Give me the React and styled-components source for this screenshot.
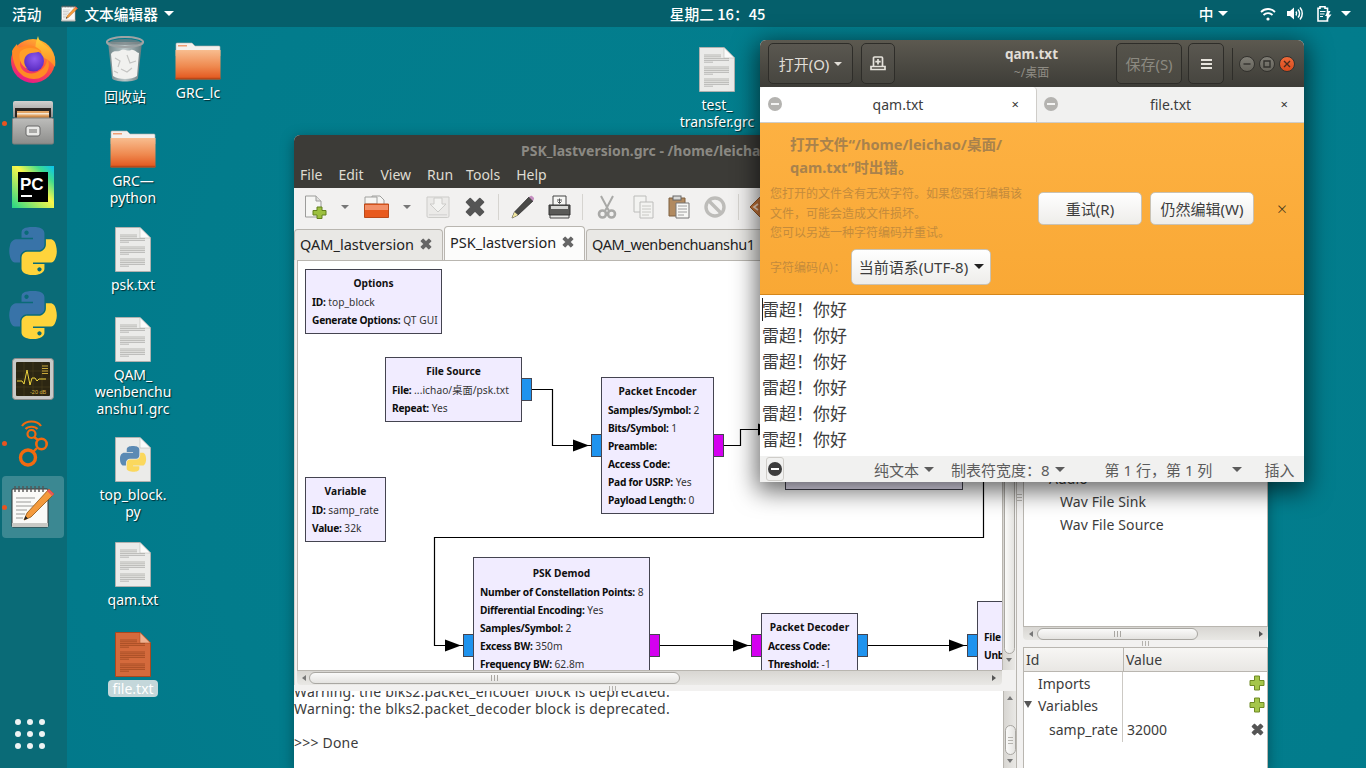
import React from "react";
import styled, { createGlobalStyle } from "styled-components";

const SANS = `"Noto Sans", "Noto Sans CJK SC", sans-serif`;
const CJK = `"Noto Sans CJK SC", sans-serif`;
const CANVAS_X = 298;
const CANVAS_Y = 261;

const GlobalStyle = createGlobalStyle`
    html, body {
        margin: 0;
        height: 100%;
        overflow: hidden;
        background: #027d8d;
    }
    * { box-sizing: border-box; }
`;

/* ---------- drawings ---------- */

const FirefoxIcon = () => (
    <svg width="46" height="47" viewBox="0 0 46 47">
        <defs>
            <linearGradient id="ffBody" x1="0.7" y1="0" x2="0.3" y2="1">
                <stop offset="0" stopColor="#ffb52e" />
                <stop offset="0.5" stopColor="#ff563b" />
                <stop offset="1" stopColor="#e5178c" />
            </linearGradient>
            <linearGradient id="ffFlame" x1="0.5" y1="0" x2="0.5" y2="1">
                <stop offset="0" stopColor="#ffd43b" />
                <stop offset="1" stopColor="#ff8a24" />
            </linearGradient>
            <radialGradient id="ffGlobe" cx="0.55" cy="0.4" r="0.7">
                <stop offset="0" stopColor="#8f5cf0" />
                <stop offset="1" stopColor="#4f22b8" />
            </radialGradient>
        </defs>
        <circle cx="23" cy="25" r="22" fill="url(#ffBody)" />
        <path d="M28 0C29 7 37 9 41 14C45 19 46 25 45 31C42 26 36 22 27 19C24 12 26 6 28 0Z" fill="url(#ffFlame)" />
        <path d="M2 15C4 11 6 9 7 8C7 11 9 12 12 11C18 8 27 10 31 15C33 20 25 20 21 19C15 18 10 22 10 27C10 34 17 39 25 37C32 35 37 29 37 23C42 30 37 43 24 43C11 43 3 32 2 15Z" fill="#ff8a25" />
        <circle cx="23.5" cy="25" r="10.5" fill="url(#ffGlobe)" />
        <path d="M10 16C14 11 25 11 30 15C27 18 20 15 16 20C13 24 14 30 18 33C11 31 8 22 10 16Z" fill="#ff9f2a" />
    </svg>
);

const CabinetIcon = () => (
    <svg width="44" height="46" viewBox="0 0 44 46">
        <defs>
            <linearGradient id="cabTop" x1="0" y1="0" x2="0" y2="1">
                <stop offset="0" stopColor="#d2d2d0" />
                <stop offset="1" stopColor="#8f8f8d" />
            </linearGradient>
            <linearGradient id="cabFront" x1="0" y1="0" x2="0" y2="1">
                <stop offset="0" stopColor="#bdbdbb" />
                <stop offset="1" stopColor="#8d8d8b" />
            </linearGradient>
        </defs>
        <path d="M2 3a2 2 0 0 1 2-2h36a2 2 0 0 1 2 2v14H2Z" fill="url(#cabTop)" />
        <rect x="4" y="8" width="36" height="14" fill="#2a2522" />
        <rect x="6" y="11" width="32" height="10" fill="#e3a566" />
        <rect x="6" y="13" width="32" height="1.5" fill="#f4e6d4" />
        <rect x="6" y="16" width="32" height="6" fill="#cf8b4a" />
        <rect x="1.5" y="18" width="41" height="26" rx="1.5" fill="url(#cabFront)" stroke="#7f7f7d" />
        <rect x="15" y="26" width="14" height="10" rx="2" fill="#e9e9e7" stroke="#666" />
        <rect x="18" y="29" width="8" height="4" fill="#a9a9a7" />
    </svg>
);

const PyCharmIcon = () => (
    <svg width="42" height="42" viewBox="0 0 42 42">
        <defs>
            <linearGradient id="pcEdge" x1="0" y1="1" x2="1" y2="0">
                <stop offset="0" stopColor="#21d789" />
                <stop offset="0.55" stopColor="#fcf84a" />
                <stop offset="0.8" stopColor="#3fdc8f" />
                <stop offset="1" stopColor="#07c3f2" />
            </linearGradient>
        </defs>
        <rect width="42" height="42" fill="url(#pcEdge)" />
        <rect x="6" y="6" width="30" height="30" fill="#000" />
        <text x="8" y="24" fontFamily="Liberation Sans, sans-serif" fontWeight="700" fontSize="17" fill="#fff">PC</text>
        <rect x="9" y="29" width="11" height="2" fill="#fff" />
    </svg>
);

const PythonIcon = ({ size = 48 }) => (
    <svg width={size} height={size} viewBox="0 0 111 112">
        <path fill="#3873a8" d="M54.9 0C50.3 0 45.9.4 42.1 1.1 30.8 3.1 28.7 7.3 28.7 15V25.3H55.5V28.7H18.6C10.8 28.7 4 33.4 1.9 42.3-.6 52.5-.7 58.8 1.9 69.5 3.8 77.4 8.3 83.1 16.1 83.1H25.3V70.9C25.3 62 33 54.2 42.1 54.2H68.8C76.3 54.2 82.2 48 82.2 40.6V15C82.2 7.8 76.1 2.3 68.8 1.1 64.2.3 59.5 0 54.9 0ZM40.4 8.2C43.2 8.2 45.4 10.5 45.4 13.3 45.4 16.1 43.2 18.4 40.4 18.4 37.6 18.4 35.4 16.1 35.4 13.3 35.4 10.5 37.6 8.2 40.4 8.2Z" />
        <path fill="#ffd43b" d="M85.6 28.7V40.6C85.6 49.8 77.8 57.6 68.8 57.6H42.1C34.8 57.6 28.7 63.9 28.7 71.2V96.8C28.7 104 35 108.3 42.1 110.4 50.6 112.9 58.7 113.3 68.8 110.4 75.5 108.4 82.2 104.6 82.2 96.8V86.6H55.5V83.1H95.6C103.4 83.1 106.3 77.7 109 69.5 111.8 61.1 111.7 53 109 42.3 107.1 34.6 103.4 28.7 95.6 28.7ZM70.6 93.7C73.4 93.7 75.6 96 75.6 98.8 75.6 101.6 73.4 103.9 70.6 103.9 67.8 103.9 65.6 101.6 65.6 98.8 65.6 96 67.8 93.7 70.6 93.7Z" />
    </svg>
);

const MonitorIcon = () => (
    <svg width="42" height="42" viewBox="0 0 42 42">
        <rect x="0.5" y="0.5" width="41" height="41" rx="3" fill="#c9c9c7" stroke="#8a8a88" />
        <rect x="4" y="4" width="34" height="34" rx="1" fill="#2c2612" />
        <path d="M4 13H38M4 21H38M4 29H38M12 4V38M21 4V38M30 4V38" stroke="#4a4220" strokeWidth="0.6" />
        <path d="M5 23H10L12 26L15 12L18 27L20 20H23L25 23L27 21H34" fill="none" stroke="#eed43f" strokeWidth="1" />
        <path d="M30 8H36M30 10.5H36M30 13H36M30 15.5H36" stroke="#c9a93a" strokeWidth="1" />
        <text x="18" y="35.5" fontFamily="Liberation Sans, sans-serif" fontSize="5.5" fill="#d8b440">-20 dB</text>
    </svg>
);

const GnuRadioIcon = () => (
    <svg width="30" height="48" viewBox="0 0 30 48" fill="none" stroke="#f26a0f">
        <path d="M4 7C8 1 19 1 23 7" strokeWidth="2.2" />
        <path d="M7.5 10C10 7 17 7 19.5 10" strokeWidth="2" />
        <circle cx="13.5" cy="15" r="4" strokeWidth="2.2" />
        <circle cx="23.5" cy="25" r="5.2" strokeWidth="2.6" />
        <circle cx="10" cy="38.5" r="7.5" strokeWidth="3.4" />
        <path d="M16 18L20 21M19 29L15 33" strokeWidth="2.4" />
    </svg>
);

const NotepadIcon = ({ size = 44 }) => (
    <svg width={size} height={size} viewBox="0 0 44 44">
        <rect x="1" y="4" width="36" height="38" rx="1" fill="#fafaf8" stroke="#333" />
        <rect x="1" y="38" width="36" height="4" fill="#c9c9c5" />
        <path d="M4 1V7M8 1V7M12 1V7M16 1V7M20 1V7M24 1V7M28 1V7M32 1V7" stroke="#555" strokeWidth="1.4" />
        <path d="M5 13H24M5 17H20M5 21H24M5 25H16M5 29H14M5 33H12" stroke="#9a9a98" strokeWidth="1.2" />
        <path d="M38 4L43 9L20 32L13 35L16 28Z" fill="#f49a3c" stroke="#8f5513" strokeWidth="0.8" />
        <path d="M38 4L43 9L41 11L36 6Z" fill="#e8585c" />
        <path d="M13 35L14.5 31L17 33.5Z" fill="#222" />
    </svg>
);

const TrashIcon = () => (
    <svg width="38" height="46" viewBox="0 0 38 46">
        <defs>
            <linearGradient id="binBody" x1="0" y1="0" x2="1" y2="0">
                <stop offset="0" stopColor="#6f8588" />
                <stop offset="0.5" stopColor="#bcc7c8" />
                <stop offset="1" stopColor="#667a7d" />
            </linearGradient>
        </defs>
        <path d="M2 6L6 42C6 44 12 45.5 19 45.5C26 45.5 32 44 32 42L36 6Z" fill="url(#binBody)" />
        <path d="M5 18C8 13 12 17 15 14C18 12 21 16 25 14C28 13 31 17 33 17L31 40C26 44 12 44 7 40Z" fill="#f1f1ef" />
        <path d="M9 22L14 25L12 31M21 19L24 27L30 25M15 33L21 36L26 32M8 35L12 37" fill="none" stroke="#c4c4c2" strokeWidth="1.2" />
        <ellipse cx="19" cy="6" rx="18" ry="5" fill="none" stroke="#9da3a4" strokeWidth="2.2" />
        <ellipse cx="19" cy="6" rx="15" ry="3" fill="#7a8385" fillOpacity="0.75" />
    </svg>
);

const FolderIcon = ({ id }) => (
    <svg width="46" height="38" viewBox="0 0 46 38">
        <defs>
            <linearGradient id={id} x1="0" y1="0" x2="0" y2="1">
                <stop offset="0" stopColor="#f8bd8f" />
                <stop offset="0.55" stopColor="#ef8a50" />
                <stop offset="1" stopColor="#e2541b" />
            </linearGradient>
        </defs>
        <path d="M1 2a1 1 0 0 1 1-1h15l3 3h24a1 1 0 0 1 1 1v9H1Z" fill="#f3f1ee" stroke="#b9b4ae" strokeWidth="0.6" />
        <rect x="3" y="3" width="9" height="1.5" fill="#ee9d72" />
        <path d="M0.5 8h45v28.5a1 1 0 0 1-1 1h-43a1 1 0 0 1-1-1Z" fill={`url(#${id})`} />
        <path d="M0.5 36.5h45" stroke="#b8481a" strokeWidth="1.4" />
    </svg>
);

const DocIcon = ({ orange, python }) => {
    const page = orange ? "#d46a3c" : "#ebebe9";
    const edge = orange ? "#a8481f" : "#b1b1af";
    const line = orange ? "#96431c" : "#a3a3a1";
    const rows = [8, 9.8, 11.6, 13.4, 15.2, 20, 21.8, 23.6, 25.4, 27.2, 32, 33.8, 35.6, 37.4, 39.2];
    return (
        <svg width="36" height="45" viewBox="0 0 36 45">
            <path d="M0.5 0.5H25L35.5 11V44.5H0.5Z" fill={page} stroke={edge} />
            <path d="M25 0.5V11H35.5Z" fill={orange ? "#eeb08f" : "#fbfbfa"} stroke={edge} strokeWidth="0.5" />
            {!python && rows.map((y, i) => (
                <path key={y} d={`M5 ${y}H${i % 5 === 4 ? 14 : i < 2 ? 22 : 30}`} stroke={line} strokeWidth="0.7" />
            ))}
            {python && (
                <g transform="translate(5 9) scale(0.235)" opacity="0.8">
                    <path fill="#3873a8" d="M54.9 0C42 0 28.7 3 28.7 15V25.3H55.5V28.7H18.6C8 28.7 0 38 0 55C0 72 6 83.1 16.1 83.1H25.3V70.9C25.3 62 33 54.2 42.1 54.2H68.8C76.3 54.2 82.2 48 82.2 40.6V15C82.2 3 68 0 54.9 0Z" />
                    <path fill="#ffd43b" d="M85.6 28.7V40.6C85.6 49.8 77.8 57.6 68.8 57.6H42.1C34.8 57.6 28.7 63.9 28.7 71.2V96.8C28.7 112 82.2 116 82.2 96.8V86.6H55.5V83.1H95.6C105 83.1 111 72 111 55C111 40 105 28.7 95.6 28.7Z" />
                </g>
            )}
        </svg>
    );
};

const WifiIcon = () => (
    <svg width="16" height="14" viewBox="0 0 16 14" fill="none" stroke="#fff" strokeWidth="1.8">
        <path d="M1 5C5 1 11 1 15 5" />
        <path d="M3.5 8C6 5.5 10 5.5 12.5 8" />
        <circle cx="8" cy="12" r="1.6" fill="#fff" stroke="none" />
    </svg>
);

const SoundIcon = () => (
    <svg width="16" height="15" viewBox="0 0 16 15" fill="none" stroke="#fff" strokeWidth="1.5">
        <path d="M0 5H3L7 1.5V13.5L3 10H0Z" fill="#fff" stroke="none" />
        <path d="M9 5.5C10 7 10 8 9 9.5" />
        <path d="M11 3.5C13 6 13 9 11 11.5" />
        <path d="M13 1.5C16 5 16 10 13 13.5" />
    </svg>
);

const BatteryIcon = () => (
    <svg width="15" height="16" viewBox="0 0 15 16">
        <path d="M3 0.8H8V2.2H10.5V15H1V2.2H3Z" fill="none" stroke="#fff" strokeWidth="1.6" />
        <path d="M3 5.5H8.5M3 8H7.5M3 10.5H6" stroke="#fff" strokeWidth="1.2" />
        <path d="M11 5L8 10H10.5L9.5 15L14.5 8.5H11.8L13.5 5Z" fill="#fff" />
    </svg>
);

const NewFileTool = () => (
    <svg width="23" height="24" viewBox="0 0 23 24">
        <path d="M1.5 1H12L17 6V22H1.5Z" fill="#f6f6f4" stroke="#9c9c9a" />
        <path d="M12 1V6H17" fill="#e0e0de" stroke="#9c9c9a" />
        <path d="M13 12H18V15.5H22V20H18V23.5H13V20H9V15.5H13Z" fill="#9cc03f" stroke="#62801e" />
    </svg>
);

const OpenTool = () => (
    <svg width="25" height="24" viewBox="0 0 25 24">
        <path d="M8 1H16L20 5V14H8Z" fill="#f6f6f4" stroke="#a0a09e" />
        <path d="M1 2H13V9H1Z" fill="#f6f6f4" stroke="#a0a09e" />
        <path d="M0.5 9H24.5V22.5H0.5Z" fill="#e85a1e" stroke="#bb4a1a" />
        <path d="M1 10H24V15H1Z" fill="#f29068" />
    </svg>
);

const SaveTool = () => (
    <svg width="24" height="24" viewBox="0 0 24 24" opacity="0.45">
        <path d="M1 2H23V21a1.5 1.5 0 0 1-1.5 1.5H2.5A1.5 1.5 0 0 1 1 21Z" fill="#e4e3e0" stroke="#a0a09c" />
        <path d="M8 3H16V9H20L12 17L4 9H8Z" fill="#f6f6f4" stroke="#a0a09c" />
        <rect x="3" y="19" width="18" height="1.5" fill="#bbb" />
    </svg>
);

const CloseCross = ({ size = 20, color = "#555" }) => (
    <svg width={size} height={size} viewBox="0 0 20 20">
        <path d="M3 6L6 3L10 7L14 3L17 6L13 10L17 14L14 17L10 13L6 17L3 14L7 10Z" fill={color} stroke={color} strokeWidth="1.5" strokeLinejoin="round" />
    </svg>
);

const PencilTool = () => (
    <svg width="24" height="24" viewBox="0 0 24 24">
        <path d="M18 2L22 6L7 20L1 23L3.5 17Z" fill="#4a4a48" stroke="#222" strokeWidth="0.7" />
        <path d="M18 2L20 0.8C21 0.4 23.5 3 23 4L22 6Z" fill="#c58fc0" />
        <path d="M1 23L3.5 17L7 20Z" fill="#f0e6a0" />
    </svg>
);

const PrinterTool = () => (
    <svg width="23" height="24" viewBox="0 0 23 24">
        <path d="M5 1H18V11H5Z" fill="#f7f7f5" stroke="#444" />
        <path d="M9 5H14M11.5 3.5V8M9.5 6.5L11.5 8.5L13.5 6.5" stroke="#555" fill="none" />
        <path d="M1 10H22V20H1Z" fill="#5a5a58" stroke="#333" />
        <path d="M3 11H20V14H3Z" fill="#d8d8d6" />
        <path d="M2 20H21V23H2Z" fill="#e8e8e6" stroke="#444" />
    </svg>
);

const ScissorsTool = () => (
    <svg width="20" height="24" viewBox="0 0 20 24" fill="none" stroke="#a9a9a7" strokeWidth="2">
        <path d="M4 1L12 16M16 1L8 16" />
        <circle cx="5.5" cy="19" r="3.5" strokeWidth="2.6" />
        <circle cx="14.5" cy="19" r="3.5" strokeWidth="2.6" />
    </svg>
);

const CopyTool = () => (
    <svg width="21" height="24" viewBox="0 0 21 24" fill="#f3f3f1" stroke="#bcbcba">
        <path d="M1 1H13V17H1Z" />
        <path d="M7 7H20V23H7Z" />
        <path d="M9 11H18M9 14H18M9 17H18M9 20H16" strokeWidth="0.8" />
    </svg>
);

const PasteTool = () => (
    <svg width="22" height="24" viewBox="0 0 22 24">
        <path d="M1 3H17V21H1Z" fill="#b18a60" stroke="#7f6041" />
        <rect x="5" y="1" width="8" height="4" fill="#d8d8d6" stroke="#666" />
        <path d="M8 8H21V23H8Z" fill="#f7f7f5" stroke="#777" />
        <path d="M10 11H19M10 14H19M10 17H19M10 20H16" stroke="#888" strokeWidth="0.8" />
    </svg>
);

const StopTool = () => (
    <svg width="22" height="22" viewBox="0 0 22 22" fill="none" stroke="#bdbcb9" strokeWidth="3.4">
        <circle cx="11" cy="11" r="9" />
        <path d="M5 5L17 17" />
    </svg>
);

const DiamondTool = () => (
    <svg width="24" height="24" viewBox="0 0 24 24">
        <path d="M12 1L23 12L12 23L1 12Z" fill="#c8773a" stroke="#8f5425" />
        <path d="M9 9L5 12L9 15" fill="none" stroke="#f5dcc6" strokeWidth="1.6" />
    </svg>
);

const NewTabIcon = () => (
    <svg width="16" height="15" viewBox="0 0 16 15" fill="none" stroke="#e6e3dc" strokeWidth="1.7">
        <path d="M3.5 10V2a1 1 0 0 1 1-1h7a1 1 0 0 1 1 1v8" />
        <path d="M1 13.5H15V10.5H1Z" />
        <path d="M8 3V8.5M5.3 5.7H10.7" />
    </svg>
);

const PlusIcon = () => (
    <svg width="16" height="16" viewBox="0 0 16 16">
        <path d="M5.5 1H10.5V5.5H15V10.5H10.5V15H5.5V10.5H1V5.5H5.5Z" fill="#a5c64a" stroke="#6f8a24" />
    </svg>
);

const ControlGlyph = ({ d, filled }) => (
    <svg width="10" height="10" viewBox="0 0 10 10" fill="none" stroke={filled ? "#4a2a1c" : "#33322e"} strokeWidth="1.4">
        <path d={d} />
    </svg>
);

/* ---------- desktop shell ---------- */

const Desktop = styled.div`
    position: relative;
    width: 1366px;
    height: 768px;
    overflow: hidden;
    font-family: ${SANS};
    background: radial-gradient(circle at 60% 50%, #03808f 0%, #027c8c 70%, #02788a 100%);
`;
const TopBar = styled.div`
    display: flex;
    align-items: center;
    height: 27px;
    padding-left: 12px;
    background: #055f6b;
    color: #fff;
    font-family: ${CJK};
    font-size: 14.7px;
    font-weight: 500;
`;
const AppMenu = styled.div`
    display: flex;
    align-items: center;
    margin-left: 20px;
    gap: 6px;
`;
const Clock = styled.div`
    margin-left: 496px;
    width: 110px;
    white-space: pre;
`;
const TrayGroup = styled.div`
    display: flex;
    align-items: center;
    margin-left: 419px;
`;
const TrayItem = styled.span`
    display: flex;
    margin-left: ${(p) => p.$ml || 0}px;
`;
const Caret = styled.span`
    display: inline-block;
    width: 0;
    height: 0;
    flex: none;
    margin-left: ${(p) => p.$ml || 0}px;
    border-left: ${(p) => p.$size || 5}px solid transparent;
    border-right: ${(p) => p.$size || 5}px solid transparent;
    border-top: ${(p) => p.$size || 5}px solid ${(p) => p.$color || "#fff"};
`;
const Dock = styled.div`
    position: absolute;
    left: 0;
    top: 27px;
    bottom: 0;
    width: 67px;
    display: flex;
    flex-direction: column;
    align-items: flex-start;
    padding: 0 0 19px 2px;
    background: #0a6b77;
`;
const DockItem = styled.div`
    position: relative;
    width: 62px;
    height: 62px;
    margin: 1px 0;
    border-radius: 4px;
    display: flex;
    align-items: center;
    justify-content: center;
    background: ${(p) => (p.$active ? "rgba(255, 255, 255, 0.2)" : "transparent")};
    &::before {
        content: "";
        display: ${(p) => (p.$running ? "block" : "none")};
        position: absolute;
        left: 0;
        top: 29px;
        width: 5px;
        height: 5px;
        border-radius: 50%;
        background: #e95420;
    }
`;
const AppGrid = styled.div`
    margin: auto 0 0 13px;
    display: grid;
    grid-template-columns: repeat(3, 6px);
    gap: 6px;
`;
const AppDot = styled.span`
    width: 6px;
    height: 6px;
    border-radius: 50%;
    background: #eef3f3;
`;
const DesktopIcon = styled.div`
    position: absolute;
    left: ${(p) => p.$cx - 45}px;
    top: ${(p) => p.$top}px;
    width: 90px;
    display: flex;
    flex-direction: column;
    align-items: center;
    color: #fff;
`;
const IconLabel = styled.div`
    margin-top: ${(p) => p.$gap ?? 4}px;
    padding: 0 ${(p) => (p.$selected ? 4 : 0)}px;
    border-radius: 4px;
    background: ${(p) => (p.$selected ? "#c4d7da" : "transparent")};
    font-size: 14px;
    line-height: 17px;
    text-align: center;
    white-space: pre-line;
    text-shadow: ${(p) => (p.$selected ? "none" : "1px 1px 1px rgba(0, 0, 0, 0.65)")};
`;

/* ---------- GNU Radio Companion window ---------- */

const GrcWindow = styled.div`
    position: absolute;
    left: 294px;
    top: 135px;
    width: 974px;
    height: 633px;
    display: flex;
    flex-direction: column;
    background: #f2f1f0;
    border-radius: 6px 6px 0 0;
    box-shadow: 0 3px 14px rgba(0, 0, 0, 0.35);
    color: #3c3c3c;
`;
const GrcTitle = styled.div`
    height: 25px;
    flex: none;
    background: #3c3b37;
    border-radius: 6px 6px 0 0;
    color: #8b8983;
    font-size: 14px;
    font-weight: 700;
    line-height: 31px;
    padding-left: 227px;
    white-space: nowrap;
`;
const GrcMenu = styled.div`
    height: 28px;
    flex: none;
    display: flex;
    align-items: center;
    padding-left: 6px;
    background: #3c3b37;
    color: #dfdbd2;
    font-size: 14px;
`;
const MenuEntry = styled.span`
    margin-right: ${(p) => p.$mr}px;
`;
const GrcToolbar = styled.div`
    height: 38px;
    flex: none;
    display: flex;
    align-items: center;
    padding-left: 3px;
`;
const ToolSlot = styled.div`
    width: ${(p) => p.$w}px;
    flex: none;
    display: flex;
    justify-content: center;
`;
const ToolSep = styled.div`
    width: 1px;
    height: 26px;
    background: #d6d4d0;
`;
const GrcBody = styled.div`
    flex: 1;
    display: flex;
    min-height: 0;
`;
const GrcLeft = styled.div`
    width: 722px;
    flex: none;
    display: flex;
    flex-direction: column;
    min-height: 0;
`;
const GrcTabs = styled.div`
    height: 34px;
    flex: none;
    display: flex;
    align-items: flex-end;
    overflow: hidden;
`;
const GrcTab = styled.div`
    flex: none;
    height: ${(p) => (p.$active ? 34 : 31)}px;
    width: ${(p) => p.$w}px;
    margin-right: ${(p) => p.$mr || 0}px;
    padding: 0 0 ${(p) => (p.$active ? 4 : 2)}px ${(p) => p.$pl}px;
    display: flex;
    align-items: center;
    gap: 5px;
    border: 1px solid #b9b6b0;
    border-bottom: none;
    border-radius: 4px 4px 0 0;
    background: ${(p) => (p.$active ? "#fcfcfb" : "#e9e8e5")};
    color: #222;
    font-size: 14.5px;
    letter-spacing: ${(p) => p.$ls || 0}px;
    white-space: nowrap;
`;
const ScrollFrame = styled.div`
    flex: none;
    height: 425px;
    margin-right: 1px;
    display: grid;
    grid-template-columns: 1fr 13px;
    grid-template-rows: 410px 15px;
    padding-left: 2px;
    border-left: 1px solid #d6d4d0;
`;
const Canvas = styled.div`
    position: relative;
    overflow: hidden;
    background: #fff;
    border-left: 1px solid #b9b6b0;
    border-top: 1px solid #b9b6b0;
`;
const WireLayer = styled.svg`
    position: absolute;
    left: 0;
    top: 0;
`;
const Block = styled.div`
    position: absolute;
    left: ${(p) => p.$x - CANVAS_X}px;
    top: ${(p) => p.$y - CANVAS_Y}px;
    width: ${(p) => p.$w}px;
    height: ${(p) => p.$h}px;
    padding: ${(p) => p.$pt ?? 4}px 6px 0;
    background: #f1ecff;
    border: 1px solid #444450;
    font-size: 10.2px;
    line-height: 18px;
    color: #111;
    white-space: nowrap;
    overflow: hidden;
`;
const BlockTitle = styled.div`
    font-weight: 700;
    text-align: center;
    margin-bottom: 1px;
`;
const BlockRow = styled.div`
    color: #333;
    letter-spacing: 0.05px;
    b {
        color: #0c0c0c;
        font-weight: 700;
        letter-spacing: -0.25px;
    }
`;
const Port = styled.div`
    position: absolute;
    left: ${(p) => p.$x - CANVAS_X}px;
    top: ${(p) => p.$y - CANVAS_Y}px;
    width: 11px;
    height: 23px;
    background: ${(p) => (p.$kind === "out" ? "#d400f0" : "#1f93ee")};
    border: 1px solid #444450;
`;
const HScroll = styled.div`
    display: flex;
    align-items: center;
    height: ${(p) => p.$h || 15}px;
    padding: 0 1px;
    background: linear-gradient(#d8d6d2, #e9e8e5);
    border-top: 1px solid #b9b6b0;
    border-radius: 0 0 4px 4px;
`;
const ScrollArrow = styled.span`
    flex: none;
    width: 0;
    height: 0;
    margin: ${(p) => p.$m};
    border-top: 3px solid transparent;
    border-bottom: 3px solid transparent;
    border-right: ${(p) => (p.$dir === "left" ? "4px solid #777" : "none")};
    border-left: ${(p) => (p.$dir === "right" ? "4px solid #555" : "none")};
`;
const HThumb = styled.div`
    width: ${(p) => p.$w}px;
    height: 12px;
    flex: none;
    border: 1px solid #a9a7a2;
    border-radius: 6px;
    background: linear-gradient(#fafaf9, #e4e3e0);
    display: flex;
    align-items: center;
    justify-content: center;
`;
const Grip = styled.span`
    width: 7px;
    height: 6px;
    background: repeating-linear-gradient(90deg, #a9a7a2 0 1px, transparent 1px 3px);
`;
const Spacer = styled.div`
    flex: 1;
`;
const VScroll = styled.div`
    display: flex;
    flex-direction: column;
    align-items: center;
    background: linear-gradient(90deg, #d8d6d2, #e9e8e5);
    border-left: 1px solid #b9b6b0;
`;
const VThumb = styled.div`
    width: 11px;
    flex: none;
    height: ${(p) => p.$h}px;
    margin-top: ${(p) => p.$mt || 0}px;
    border: 1px solid #a9a7a2;
    border-radius: 6px;
    background: linear-gradient(90deg, #fafaf9, #e4e3e0);
    display: flex;
    align-items: center;
    justify-content: center;
`;
const VArrow = styled.span`
    flex: none;
    width: 0;
    height: 0;
    margin: ${(p) => p.$m};
    border-left: 3px solid transparent;
    border-right: 3px solid transparent;
    border-bottom: ${(p) => (p.$dir === "up" ? "4px solid #777" : "none")};
    border-top: ${(p) => (p.$dir === "down" ? "4px solid #777" : "none")};
`;
const ScrollCorner = styled.div`
    background: #f2f1f0;
`;
const HSash = styled.div`
    height: ${(p) => p.$h || 6}px;
    flex: none;
    display: flex;
    align-items: center;
    justify-content: center;
    padding-right: ${(p) => p.$pr || 0}px;
    background: #f2f1f0;
`;
const SashGrip = styled.span`
    width: 7px;
    height: 5px;
    background: repeating-linear-gradient(90deg, #b5b3ae 0 1px, transparent 1px 3px);
`;
const ConsoleRow = styled.div`
    flex: 1;
    min-height: 0;
    display: grid;
    grid-template-columns: 709px 13px;
`;
const Console = styled.div`
    background: #fff;
    overflow: hidden;
    font-size: 14px;
    line-height: 17px;
    white-space: pre;
    letter-spacing: 0.2px;
    color: #3c3c3c;
`;
const ConsoleText = styled.div`
    margin-top: -8px;
`;
const VSash = styled.div`
    width: 6px;
    flex: none;
    display: flex;
    align-items: center;
    justify-content: center;
    border-left: 1px solid #b9b6b0;
`;
const VSashGrip = styled.span`
    width: 5px;
    height: 7px;
    background: repeating-linear-gradient(#b5b3ae 0 1px, transparent 1px 3px);
`;
const GrcRight = styled.div`
    flex: 1;
    display: flex;
    flex-direction: column;
    min-height: 0;
    margin-left: 1px;
`;
const BlockTree = styled.div`
    flex: 1;
    min-height: 0;
    padding-top: 240px;
    background: #fff;
    border: 1px solid #b9b6b0;
    border-bottom: none;
    font-size: 14px;
    line-height: 23px;
    letter-spacing: 0.1px;
`;
const TreeRow = styled.div`
    padding-left: ${(p) => p.$indent}px;
`;
const VarTable = styled.div`
    height: 121px;
    flex: none;
    background: #fff;
    border: 1px solid #b9b6b0;
    border-bottom: none;
    font-size: 14px;
`;
const VarHeader = styled.div`
    height: 24px;
    display: grid;
    grid-template-columns: 99px 1fr;
    align-items: center;
    background: linear-gradient(#f7f6f4, #e9e7e4);
    border-bottom: 1px solid #b9b6b0;
`;
const VarHeadCell = styled.div`
    height: 100%;
    display: flex;
    align-items: center;
    padding-left: 2px;
    & + & {
        border-left: 1px solid #b9b6b0;
    }
`;
const VarRow = styled.div`
    position: relative;
    display: grid;
    grid-template-columns: 99px 1fr 20px;
    align-items: center;
    height: ${(p) => p.$h}px;
`;
const VarName = styled.div`
    height: 100%;
    display: flex;
    align-items: center;
    padding-left: ${(p) => p.$indent}px;
    border-right: 1px solid #ccc9c4;
    white-space: nowrap;
`;
const VarValue = styled.div`
    padding-left: 4px;
`;
const VarAction = styled.div`
    display: flex;
    justify-content: center;
`;
const Expander = styled.span`
    position: absolute;
    left: 0;
    top: 7px;
    width: 0;
    height: 0;
    border-left: 4px solid transparent;
    border-right: 4px solid transparent;
    border-top: 7px solid #555;
`;

/* ---------- gedit window ---------- */

const GeditWindow = styled.div`
    position: absolute;
    left: 760px;
    top: 40px;
    width: 544px;
    height: 442px;
    display: flex;
    flex-direction: column;
    border-radius: 6px 6px 0 0;
    background: #fff;
    box-shadow: 0 6px 24px 3px rgba(0, 0, 0, 0.6);
    font-family: ${SANS};
    color: #3d3d3d;
`;
const HeaderBar = styled.div`
    height: 47px;
    flex: none;
    display: grid;
    grid-template-columns: 1fr auto 1fr;
    align-items: center;
    padding: 0 9px 0 8px;
    border-radius: 6px 6px 0 0;
    background: linear-gradient(#5c5950, #3d3c37);
`;
const HeaderSide = styled.div`
    display: flex;
    align-items: center;
    justify-content: ${(p) => (p.$end ? "flex-end" : "flex-start")};
    gap: ${(p) => p.$gap}px;
`;
const HeaderButton = styled.div`
    width: ${(p) => p.$w}px;
    height: 41px;
    flex: none;
    display: flex;
    align-items: center;
    justify-content: center;
    gap: 5px;
    border: 1px solid #2e2d29;
    border-radius: 5px;
    background: ${(p) => (p.$disabled ? "linear-gradient(#55534b, #4a4841)" : "linear-gradient(#5a5750, #474640)")};
    color: ${(p) => (p.$disabled ? "#8c8a81" : "#e1ded7")};
    font-size: 15px;
`;
const Hamburger = styled.span`
    width: 11px;
    height: 10px;
    border-top: 2px solid #e6e3dc;
    border-bottom: 2px solid #e6e3dc;
    position: relative;
    &::after {
        content: "";
        position: absolute;
        left: 0;
        right: 0;
        top: 2px;
        height: 2px;
        background: #e6e3dc;
    }
`;
const HeaderTitle = styled.div`
    text-align: center;
    line-height: 17px;
`;
const TitleMain = styled.div`
    margin-top: -1px;
    color: #e1ded7;
    font-weight: 700;
    font-size: 13.5px;
`;
const TitleSub = styled.div`
    margin-top: 1px;
    color: #8f8c84;
    font-size: 12px;
`;
const HeaderSep = styled.span`
    width: 1px;
    height: 32px;
    margin-left: 2px;
    background: #2e2d29;
`;
const WindowControls = styled.div`
    display: flex;
    gap: 4px;
`;
const WindowControl = styled.span`
    width: 16px;
    height: 16px;
    border-radius: 50%;
    display: flex;
    align-items: center;
    justify-content: center;
    background: ${(p) => (p.$close ? "linear-gradient(#ef6a3a, #d94a1c)" : "linear-gradient(#7f7d75, #66645c)")};
    border: 1px solid #33322e;
`;
const GeditTabs = styled.div`
    height: 36px;
    flex: none;
    display: grid;
    grid-template-columns: 277px 1fr;
    background: #f1f1f0;
`;
const GeditTab = styled.div`
    position: relative;
    display: flex;
    align-items: center;
    justify-content: center;
    background: ${(p) => (p.$active ? "#fff" : "#f1f1f0")};
    border-right: ${(p) => (p.$active ? "1px solid #cfcdc9" : "none")};
    border-radius: 4px 4px 0 0;
    border-bottom: 1px solid #cfcdc9;
    font-size: 14px;
`;
const TabMinus = styled.span`
    position: absolute;
    left: ${(p) => p.$x}px;
    top: 10px;
    width: 14px;
    height: 14px;
    border-radius: 50%;
    background: #b4b3b0;
    &::after {
        content: "";
        position: absolute;
        left: 3px;
        right: 3px;
        top: 6px;
        height: 2px;
        background: #f4f4f3;
    }
`;
const TabClose = styled.span`
    position: absolute;
    right: ${(p) => p.$right}px;
    top: 7px;
    font-size: 13px;
    line-height: 20px;
    color: #333;
`;
const InfoBar = styled.div`
    height: 172px;
    flex: none;
    display: flex;
    flex-direction: column;
    padding: 10px 0 0 10px;
    background: linear-gradient(#fdb142, #f9a835);
    border-bottom: 1px solid #d5861a;
    font-family: ${CJK};
`;
const InfoTop = styled.div`
    display: flex;
    align-items: flex-end;
`;
const InfoMessage = styled.div`
    width: 268px;
    flex: none;
`;
const InfoHeading = styled.div`
    padding-left: 20px;
    font-family: ${SANS};
    font-size: 14.6px;
    font-weight: 700;
    line-height: 23px;
    color: #a9824c;
`;
const InfoText = styled.div`
    margin-top: 4px;
    font-size: 12px;
    line-height: 19.5px;
    color: #c48b3c;
`;
const InfoButton = styled.div`
    width: ${(p) => p.$w}px;
    height: ${(p) => p.$h}px;
    margin-right: ${(p) => p.$mr || 0}px;
    flex: none;
    display: flex;
    align-items: center;
    justify-content: center;
    gap: 6px;
    border: 1px solid #c9c2b4;
    border-radius: 5px;
    background: linear-gradient(#fff, #eeedea);
    color: #3d3d3d;
    font-family: ${SANS};
    font-size: 15px;
`;
const InfoActions = styled.div`
    display: flex;
    align-items: center;
    margin-bottom: 17px;
`;
const InfoClose = styled.span`
    margin-left: 22px;
    font-size: 12px;
    color: #4b3a1e;
`;
const InfoEncoding = styled.div`
    display: flex;
    align-items: center;
    gap: 6px;
    margin-top: 7px;
    font-size: 12px;
    color: #c48b3c;
`;
const EditorArea = styled.div`
    flex: 1;
    position: relative;
    padding: 1px 0 0 2px;
    font-family: ${CJK};
    font-size: 17px;
    line-height: 26px;
    color: #3d3d3d;
    background: #fff;
    &::before {
        content: "";
        position: absolute;
        left: 2px;
        top: 3px;
        width: 1px;
        height: 23px;
        background: #222;
    }
`;
const StatusBar = styled.div`
    height: 26px;
    flex: none;
    display: flex;
    align-items: center;
    padding-left: 6px;
    background: #f1f1f0;
    font-family: ${SANS};
    font-size: 15px;
    color: #5c5c5c;
`;
const StatusToggle = styled.div`
    width: 18px;
    height: 24px;
    flex: none;
    display: flex;
    align-items: center;
    justify-content: center;
    border: 1px solid #cfcdc9;
    border-radius: 3px;
`;
const StatusDot = styled.span`
    position: relative;
    width: 14px;
    height: 14px;
    border-radius: 50%;
    background: #3d3d3d;
    &::after {
        content: "";
        position: absolute;
        left: 3px;
        right: 3px;
        top: 6px;
        height: 2px;
        background: #fff;
    }
`;
const StatusItem = styled.span`
    display: flex;
    align-items: center;
    margin-left: ${(p) => p.$ml}px;
    white-space: pre;
`;

/* ---------- data ---------- */

const desktopIcons = [
    { cx: 125, top: 36, icon: <TrashIcon />, label: "回收站", gap: 6 },
    { cx: 198, top: 42, icon: <FolderIcon id="folderA" />, label: "GRC_lc" },
    { cx: 133, top: 130, icon: <FolderIcon id="folderB" />, label: "GRC—\npython" },
    { cx: 133, top: 227, icon: <DocIcon />, label: "psk.txt" },
    { cx: 133, top: 317, icon: <DocIcon />, label: "QAM_\nwenbenchu\nanshu1.grc" },
    { cx: 133, top: 437, icon: <DocIcon python />, label: "top_block.\npy" },
    { cx: 133, top: 542, icon: <DocIcon />, label: "qam.txt" },
    { cx: 133, top: 632, icon: <DocIcon orange />, label: "file.txt", selected: true, gap: 3 },
    { cx: 717, top: 47, icon: <DocIcon />, label: "test_\ntransfer.grc" },
];

const blocks = [
    { x: 305, y: 269, w: 137, h: 65, title: "Options", rows: [["ID:", "top_block"], ["Generate Options:", "QT GUI"]] },
    { x: 385, y: 357, w: 137, h: 65, title: "File Source", rows: [["File:", "...ichao/桌面/psk.txt"], ["Repeat:", "Yes"]] },
    { x: 305, y: 477, w: 81, h: 65, title: "Variable", rows: [["ID:", "samp_rate"], ["Value:", "32k"]] },
    {
        x: 601, y: 377, w: 113, h: 137, title: "Packet Encoder",
        rows: [["Samples/Symbol:", "2"], ["Bits/Symbol:", "1"], ["Preamble:", ""], ["Access Code:", ""], ["Pad for USRP:", "Yes"], ["Payload Length:", "0"]],
    },
    {
        x: 473, y: 557, w: 177, h: 137, pt: 6, title: "PSK Demod",
        rows: [["Number of Constellation Points:", "8"], ["Differential Encoding:", "Yes"], ["Samples/Symbol:", "2"], ["Excess BW:", "350m"], ["Frequency BW:", "62.8m"]],
    },
    { x: 761, y: 613, w: 97, h: 100, title: "Packet Decoder", rows: [["Access Code:", ""], ["Threshold:", "-1"]] },
    { x: 977, y: 601, w: 100, h: 100, pt: 7, title: "", rows: [["File", ""], ["Unb", ""]] },
    { x: 785, y: 400, w: 178, h: 90, title: "", rows: [] },
];

const ports = [
    { x: 521, y: 378, kind: "in" },
    { x: 591, y: 434, kind: "in" },
    { x: 713, y: 434, kind: "out" },
    { x: 463, y: 634, kind: "in" },
    { x: 649, y: 634, kind: "out" },
    { x: 751, y: 634, kind: "out" },
    { x: 857, y: 634, kind: "in" },
    { x: 967, y: 634, kind: "in" },
];

const wires = [
    "M532 389.5H552.5V445.5H591",
    "M724 445.5H740.5V429.5H760",
    "M983.5 400V537.5H434.5V645.5H463",
    "M660 645.5H751",
    "M867 645.5H967",
];

const arrowTips = [
    [573, 445.5],
    [758, 429.5],
    [445, 645.5],
    [733, 645.5],
    [949, 645.5],
];

const textLines = ["雷超！你好", "雷超！你好", "雷超！你好", "雷超！你好", "雷超！你好", "雷超！你好"];

/* ---------- parts ---------- */

function Diagram() {
    return (
        <Canvas>
            <WireLayer width="705" height="410" viewBox={`${CANVAS_X} ${CANVAS_Y} 705 410`}>
                {wires.map((d) => (
                    <path key={d} d={d} fill="none" stroke="#000" strokeWidth="1.2" />
                ))}
                {arrowTips.map(([x, y]) => (
                    <path key={x} d={`M${x} ${y - 6}L${x + 16} ${y}L${x} ${y + 6}Z`} fill="#000" />
                ))}
            </WireLayer>
            {ports.map((p) => (
                <Port key={p.x} $x={p.x} $y={p.y} $kind={p.kind} />
            ))}
            {blocks.map((b) => (
                <Block key={b.x + "-" + b.y} $x={b.x} $y={b.y} $w={b.w} $h={b.h} $pt={b.pt}>
                    <BlockTitle>{b.title || "\u00a0"}</BlockTitle>
                    {b.rows.map(([key, value]) => (
                        <BlockRow key={key}>
                            <b>{key}</b> {value}
                        </BlockRow>
                    ))}
                </Block>
            ))}
        </Canvas>
    );
}

function GrcApp() {
    return (
        <GrcWindow>
            <GrcTitle>PSK_lastversion.grc - /home/leichao</GrcTitle>
            <GrcMenu>
                <MenuEntry $mr={16}>File</MenuEntry>
                <MenuEntry $mr={17}>Edit</MenuEntry>
                <MenuEntry $mr={16}>View</MenuEntry>
                <MenuEntry $mr={13}>Run</MenuEntry>
                <MenuEntry $mr={16}>Tools</MenuEntry>
                <MenuEntry $mr={0}>Help</MenuEntry>
            </GrcMenu>
            <GrcToolbar>
                <ToolSlot $w={36}><NewFileTool /></ToolSlot>
                <ToolSlot $w={24}><Caret $size={4} $color="#777" /></ToolSlot>
                <ToolSlot $w={38}><OpenTool /></ToolSlot>
                <ToolSlot $w={24}><Caret $size={4} $color="#777" /></ToolSlot>
                <ToolSlot $w={38}><SaveTool /></ToolSlot>
                <ToolSlot $w={36}><CloseCross size={24} color="#555" /></ToolSlot>
                <ToolSlot $w={10}><ToolSep /></ToolSlot>
                <ToolSlot $w={40}><PencilTool /></ToolSlot>
                <ToolSlot $w={32}><PrinterTool /></ToolSlot>
                <ToolSlot $w={14}><ToolSep /></ToolSlot>
                <ToolSlot $w={36}><ScissorsTool /></ToolSlot>
                <ToolSlot $w={36}><CopyTool /></ToolSlot>
                <ToolSlot $w={36}><PasteTool /></ToolSlot>
                <ToolSlot $w={36}><StopTool /></ToolSlot>
                <ToolSlot $w={10}><ToolSep /></ToolSlot>
                <ToolSlot $w={36}><DiamondTool /></ToolSlot>
            </GrcToolbar>
            <GrcBody>
                <GrcLeft>
                    <GrcTabs>
                        <GrcTab $w={149} $pl={5} $mr={1}>
                            QAM_lastversion <CloseCross size={14} color="#666" />
                        </GrcTab>
                        <GrcTab $w={141} $pl={5} $active $mr={1}>
                            PSK_lastversion <CloseCross size={14} color="#666" />
                        </GrcTab>
                        <GrcTab $w={200} $pl={5} $ls={-0.36}>QAM_wenbenchuanshu1</GrcTab>
                    </GrcTabs>
                    <ScrollFrame>
                        <Diagram />
                        <VScroll>
                            <VThumb $h={394} />
                            <VArrow $dir="down" $m="4px 0 0" />
                        </VScroll>
                        <HScroll>
                            <ScrollArrow $dir="left" $m="0 3px 0 4px" />
                            <HThumb $w={371}><Grip /></HThumb>
                            <Spacer />
                            <ScrollArrow $dir="right" $m="0 5px" />
                        </HScroll>
                        <ScrollCorner />
                    </ScrollFrame>
                    <HSash $pr={85}><SashGrip /></HSash>
                    <ConsoleRow>
                        <Console>
                            <ConsoleText>
                                Warning: the blks2.packet_encoder block is deprecated.{"\n"}
                                Warning: the blks2.packet_decoder block is deprecated.{"\n\n"}
                                {">>> Done"}
                            </ConsoleText>
                        </Console>
                        <VScroll>
                            <VArrow $dir="up" $m="5px 0 0" />
                            <VThumb $h={30} $mt={25}><VSashGrip /></VThumb>
                            <VArrow $dir="down" $m="4px 0 0" />
                        </VScroll>
                    </ConsoleRow>
                </GrcLeft>
                <VSash><VSashGrip /></VSash>
                <GrcRight>
                    <BlockTree>
                        <TreeRow $indent={25}>Audio</TreeRow>
                        <TreeRow $indent={36}>Wav File Sink</TreeRow>
                        <TreeRow $indent={36}>Wav File Source</TreeRow>
                    </BlockTree>
                    <HScroll $h={14}>
                        <ScrollArrow $dir="left" $m="0 4px 0 5px" />
                        <HThumb $w={161}><Grip /></HThumb>
                        <Spacer />
                        <ScrollArrow $dir="right" $m="0 4px" />
                    </HScroll>
                    <HSash $h={7}><SashGrip /></HSash>
                    <VarTable>
                        <VarHeader>
                            <VarHeadCell>Id</VarHeadCell>
                            <VarHeadCell>Value</VarHeadCell>
                        </VarHeader>
                        <VarRow $h={22}>
                            <VarName $indent={14}>Imports</VarName>
                            <span />
                            <VarAction><PlusIcon /></VarAction>
                        </VarRow>
                        <VarRow $h={22}>
                            <Expander />
                            <VarName $indent={14}>Variables</VarName>
                            <span />
                            <VarAction><PlusIcon /></VarAction>
                        </VarRow>
                        <VarRow $h={26}>
                            <VarName $indent={25}>samp_rate</VarName>
                            <VarValue>32000</VarValue>
                            <VarAction><CloseCross size={15} color="#555" /></VarAction>
                        </VarRow>
                    </VarTable>
                </GrcRight>
            </GrcBody>
        </GrcWindow>
    );
}

function GeditApp() {
    return (
        <GeditWindow>
            <HeaderBar>
                <HeaderSide $gap={8}>
                    <HeaderButton $w={85}>打开(O)<Caret $size={4} $color="#e1ded7" /></HeaderButton>
                    <HeaderButton $w={34}><NewTabIcon /></HeaderButton>
                </HeaderSide>
                <HeaderTitle>
                    <TitleMain>qam.txt</TitleMain>
                    <TitleSub>~/桌面</TitleSub>
                </HeaderTitle>
                <HeaderSide $gap={6} $end>
                    <HeaderButton $w={66} $disabled>保存(S)</HeaderButton>
                    <HeaderButton $w={36}><Hamburger /></HeaderButton>
                    <HeaderSep />
                    <WindowControls>
                        <WindowControl><ControlGlyph d="M1.5 5H8.5" /></WindowControl>
                        <WindowControl><ControlGlyph d="M2 2H8V8H2Z" /></WindowControl>
                        <WindowControl $close><ControlGlyph filled d="M2 2L8 8M8 2L2 8" /></WindowControl>
                    </WindowControls>
                </HeaderSide>
            </HeaderBar>
            <GeditTabs>
                <GeditTab $active>
                    <TabMinus $x={8} />
                    qam.txt
                    <TabClose $right={17}>×</TabClose>
                </GeditTab>
                <GeditTab>
                    <TabMinus $x={7} />
                    file.txt
                    <TabClose $right={16}>×</TabClose>
                </GeditTab>
            </GeditTabs>
            <InfoBar>
                <InfoTop>
                    <InfoMessage>
                        <InfoHeading>
                            打开文件“/home/leichao/桌面/
                            <br />
                            qam.txt”时出错。
                        </InfoHeading>
                        <InfoText>
                            您打开的文件含有无效字符。如果您强行编辑该
                            <br />
                            文件，可能会造成文件损坏。
                            <br />
                            您可以另选一种字符编码并重试。
                        </InfoText>
                    </InfoMessage>
                    <InfoActions>
                        <InfoButton $w={104} $h={33} $mr={8}>重试(R)</InfoButton>
                        <InfoButton $w={104} $h={33}>仍然编辑(W)</InfoButton>
                        <InfoClose>×</InfoClose>
                    </InfoActions>
                </InfoTop>
                <InfoEncoding>
                    字符编码(A)：
                    <InfoButton $w={140} $h={36}>当前语系(UTF-8)<Caret $size={5} $color="#222" /></InfoButton>
                </InfoEncoding>
            </InfoBar>
            <EditorArea>
                {textLines.map((line, i) => (
                    <div key={i}>{line}</div>
                ))}
            </EditorArea>
            <StatusBar>
                <StatusToggle><StatusDot /></StatusToggle>
                <StatusItem $ml={90}>纯文本<Caret $size={5} $color="#5c5c5c" $ml={5} /></StatusItem>
                <StatusItem $ml={17}>制表符宽度：8<Caret $size={5} $color="#5c5c5c" $ml={5} /></StatusItem>
                <StatusItem $ml={40}>第 1 行，第 1 列</StatusItem>
                <StatusItem $ml={20}><Caret $size={5} $color="#5c5c5c" /></StatusItem>
                <StatusItem $ml={22}>插入</StatusItem>
            </StatusBar>
        </GeditWindow>
    );
}

export default function App() {
    return (
        <>
            <GlobalStyle />
            <Desktop>
                <TopBar>
                    活动
                    <AppMenu>
                        <NotepadIcon size={17} />
                        文本编辑器
                        <Caret />
                    </AppMenu>
                    <Clock>星期二 16：45</Clock>
                    <TrayGroup>
                        中
                        <Caret $ml={4} />
                        <TrayItem $ml={32}><WifiIcon /></TrayItem>
                        <TrayItem $ml={11}><SoundIcon /></TrayItem>
                        <TrayItem $ml={14}><BatteryIcon /></TrayItem>
                        <Caret $ml={9} />
                    </TrayGroup>
                </TopBar>
                <Dock>
                    <DockItem><FirefoxIcon /></DockItem>
                    <DockItem $running><CabinetIcon /></DockItem>
                    <DockItem><PyCharmIcon /></DockItem>
                    <DockItem><PythonIcon /></DockItem>
                    <DockItem><PythonIcon /></DockItem>
                    <DockItem><MonitorIcon /></DockItem>
                    <DockItem $running><GnuRadioIcon /></DockItem>
                    <DockItem $running $active><NotepadIcon /></DockItem>
                    <AppGrid>
                        {Array.from({ length: 9 }, (_, i) => (
                            <AppDot key={i} />
                        ))}
                    </AppGrid>
                </Dock>
                {desktopIcons.map((item) => (
                    <DesktopIcon key={item.label} $cx={item.cx} $top={item.top}>
                        {item.icon}
                        <IconLabel $gap={item.gap} $selected={item.selected}>{item.label}</IconLabel>
                    </DesktopIcon>
                ))}
                <GrcApp />
                <GeditApp />
            </Desktop>
        </>
    );
}
